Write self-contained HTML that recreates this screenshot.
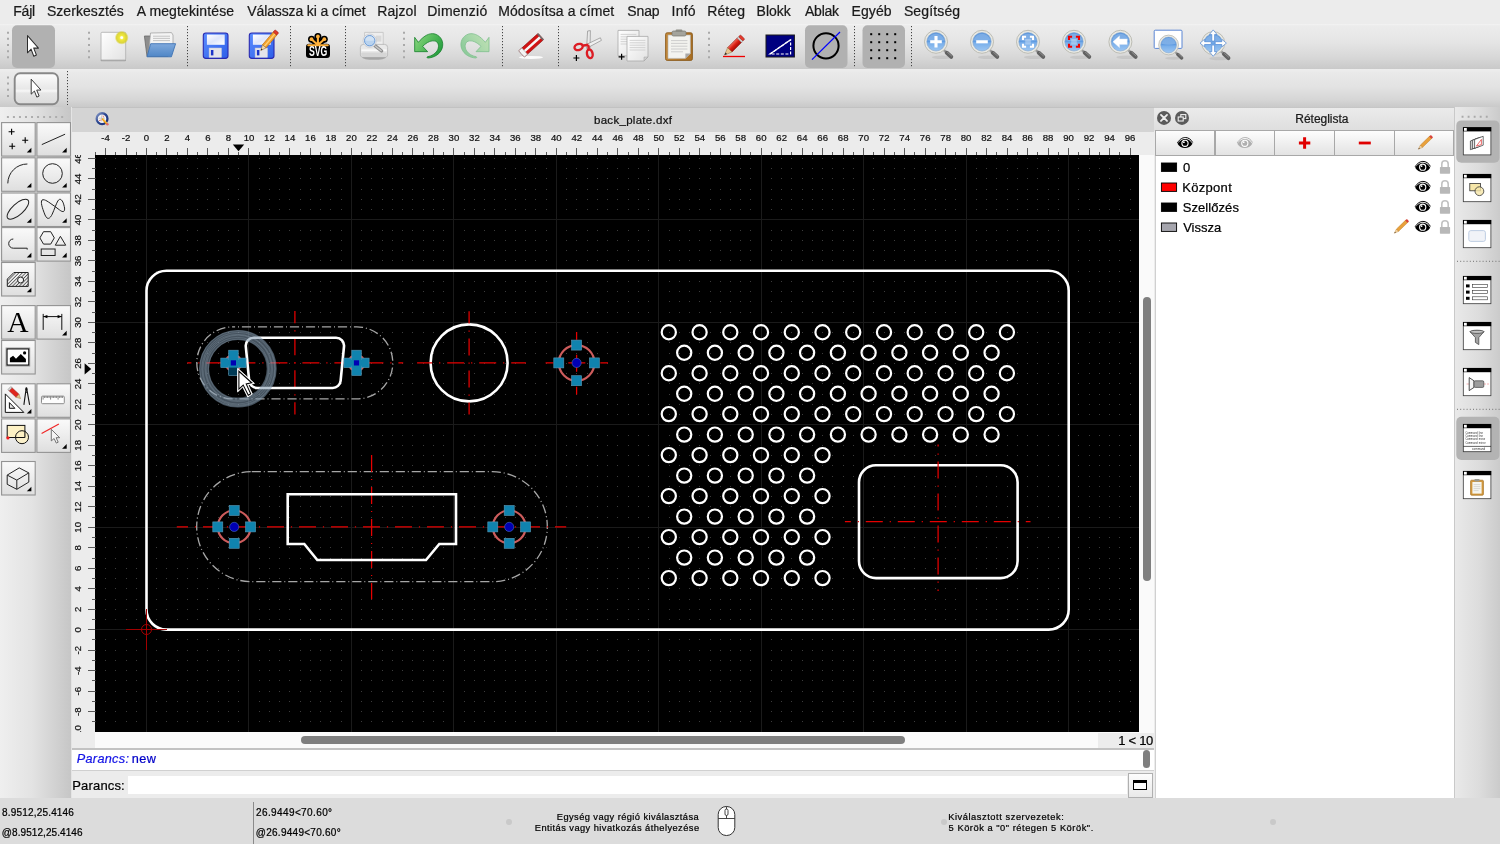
<!DOCTYPE html><html><head><meta charset="utf-8"><title>back_plate.dxf</title><style>
*{box-sizing:border-box;margin:0;padding:0}
html,body{width:1500px;height:844px;overflow:hidden;background:#ececec;font-family:"Liberation Sans",sans-serif;}
#app{position:absolute;left:0;top:0;width:1500px;height:844px;will-change:transform}
.abs{position:absolute}
.ft{position:absolute;white-space:nowrap;line-height:1;font-family:"Liberation Sans",sans-serif;-webkit-text-stroke:0.22px currentColor}
#menubar{position:absolute;left:0;top:0;width:1500px;height:24px;background:#ececec}
#tb1{position:absolute;left:0;top:24px;width:1500px;height:44.5px;background:linear-gradient(#f3f3f3,#ececec 4%,#e5e5e5 40%,#d7d7d7 75%,#c9c9c9)}
#tb2{position:absolute;left:0;top:68.5px;width:1500px;height:39px;background:linear-gradient(#eeeeee,#e9e9e9 10%,#e3e3e3 45%,#d6d6d6 78%,#c8c8c8)}
#left{position:absolute;left:0;top:107px;width:71px;height:691px;background:linear-gradient(90deg,#efefef,#e3e3e3 45%,#c6c6c6)}
.lb{position:absolute;width:34px;height:34px;border:1px solid #a9a9a9;background:linear-gradient(#fbfbfb,#e9e9e9 60%,#dcdcdc)}
.sel{position:absolute;background:#b2b2b2;border-radius:5px}
.vsep{position:absolute;width:0;border-left:1px dotted #555}
.grip{position:absolute;width:2px;border-left:2px dotted #aaa}
#status{position:absolute;left:0;top:798px;width:1500px;height:46px;background:#dcdcdc}
</style></head><body><div id="app">
<div id="menubar"></div>
<span class="ft" id="m0" style="left:13.2px;top:4.00px;font-size:14px;color:#1a1a1a;letter-spacing:-0.181px;">Fájl</span>
<span class="ft" id="m1" style="left:46.9px;top:4.00px;font-size:14px;color:#1a1a1a;letter-spacing:0.063px;">Szerkesztés</span>
<span class="ft" id="m2" style="left:136.7px;top:4.00px;font-size:14px;color:#1a1a1a;letter-spacing:0.129px;">A megtekintése</span>
<span class="ft" id="m3" style="left:247.3px;top:4.00px;font-size:14px;color:#1a1a1a;letter-spacing:-0.125px;">Válassza ki a címet</span>
<span class="ft" id="m4" style="left:377.2px;top:4.00px;font-size:14px;color:#1a1a1a;letter-spacing:0.103px;">Rajzol</span>
<span class="ft" id="m5" style="left:427.2px;top:4.00px;font-size:14px;color:#1a1a1a;letter-spacing:0.244px;">Dimenzió</span>
<span class="ft" id="m6" style="left:498.2px;top:4.00px;font-size:14px;color:#1a1a1a;letter-spacing:0.104px;">Módosítsa a címet</span>
<span class="ft" id="m7" style="left:627.3px;top:4.00px;font-size:14px;color:#1a1a1a;letter-spacing:-0.130px;">Snap</span>
<span class="ft" id="m8" style="left:671.6px;top:4.00px;font-size:14px;color:#1a1a1a;letter-spacing:0.203px;">Infó</span>
<span class="ft" id="m9" style="left:707.2px;top:4.00px;font-size:14px;color:#1a1a1a;letter-spacing:0.130px;">Réteg</span>
<span class="ft" id="m10" style="left:756.6px;top:4.00px;font-size:14px;color:#1a1a1a;letter-spacing:-0.015px;">Blokk</span>
<span class="ft" id="m11" style="left:805.0px;top:4.00px;font-size:14px;color:#1a1a1a;letter-spacing:-0.235px;">Ablak</span>
<span class="ft" id="m12" style="left:851.6px;top:4.00px;font-size:14px;color:#1a1a1a;letter-spacing:0.066px;">Egyéb</span>
<span class="ft" id="m13" style="left:903.9px;top:4.00px;font-size:14px;color:#1a1a1a;letter-spacing:0.137px;">Segítség</span>
<div id="tb1"></div><div id="tb2"></div>
<svg class="abs" style="left:0;top:24px" width="1500" height="84" viewBox="0 24 1500 84">
<defs>
<linearGradient id="gpaper" x1="0" y1="0" x2="1" y2="1"><stop offset="0" stop-color="#ffffff"/><stop offset="1" stop-color="#e2e2e2"/></linearGradient>
<radialGradient id="gglow"><stop offset="0" stop-color="#ffffc0"/><stop offset="0.35" stop-color="#f0e83a"/><stop offset="0.75" stop-color="#d8d020" stop-opacity="0.85"/><stop offset="1" stop-color="#d8d020" stop-opacity="0"/></radialGradient>
<linearGradient id="gfold" x1="0" y1="0" x2="0" y2="1"><stop offset="0" stop-color="#7fa9dc"/><stop offset="1" stop-color="#4f86c6"/></linearGradient>
<linearGradient id="gdisk" x1="0" y1="0" x2="1" y2="1"><stop offset="0" stop-color="#5a8cff"/><stop offset="1" stop-color="#2e5fe8"/></linearGradient>
<linearGradient id="glabel" x1="0" y1="0" x2="1" y2="1"><stop offset="0" stop-color="#ffffff"/><stop offset="0.5" stop-color="#dfe6fb"/><stop offset="1" stop-color="#ffffff"/></linearGradient>
<linearGradient id="ggreen" x1="0" y1="0.2" x2="1" y2="0.8"><stop offset="0" stop-color="#86d47c"/><stop offset="0.5" stop-color="#4fb857"/><stop offset="1" stop-color="#1f9a3c"/></linearGradient>
<linearGradient id="ggreen2" x1="0" y1="0.2" x2="1" y2="0.8"><stop offset="0" stop-color="#bfe0b4"/><stop offset="0.5" stop-color="#a4d6a8"/><stop offset="1" stop-color="#86c796"/></linearGradient>
<linearGradient id="glens" x1="0" y1="0" x2="0" y2="1"><stop offset="0" stop-color="#5b97de"/><stop offset="0.5" stop-color="#5f9ce2"/><stop offset="0.55" stop-color="#78aeea"/><stop offset="1" stop-color="#9cc6f2"/></linearGradient>
<linearGradient id="gclip" x1="0" y1="0" x2="1" y2="0"><stop offset="0" stop-color="#c48a3c"/><stop offset="1" stop-color="#a86e22"/></linearGradient>
<linearGradient id="gpen" x1="0" y1="0" x2="1" y2="0"><stop offset="0" stop-color="#f26a5c"/><stop offset="0.5" stop-color="#d81e12"/><stop offset="1" stop-color="#a80e08"/></linearGradient>
<g id="zoom"><ellipse cx="6" cy="15.4" rx="10" ry="1.8" fill="#888" opacity="0.2"/><path d="M7.4 7.8L15 14.8" stroke="#9a9a9a" stroke-width="2.6" stroke-linecap="round"/><path d="M10.8 11L15.2 15" stroke="#626262" stroke-width="4" stroke-linecap="round"/><path d="M11.4 10.4L15.6 14.2" stroke="#9a9a9a" stroke-width="0.8" stroke-linecap="round"/><circle cx="0" cy="0" r="11.5" fill="#e9e9e3" stroke="#bcbcb4" stroke-width="1"/><circle cx="0" cy="0" r="9.2" fill="url(#glens)" stroke="#7fa2cc" stroke-width="0.6"/><path d="M-8.2 -1.5A8.4 8.4 0 0 1 8.2 -1.5A14 6 0 0 1 -8.2 -1.5Z" fill="#fff" fill-opacity="0.2"/></g>
</defs>
<rect x="12" y="25.3" width="43" height="42.7" rx="5" fill="#b1b1b1"/>
<rect x="805" y="25.3" width="42.5" height="42.7" rx="5" fill="#b1b1b1"/>
<rect x="862.5" y="25.3" width="42.5" height="42.7" rx="5" fill="#b1b1b1"/>
<path d="M8 31.7V59" stroke="#a9a9a9" stroke-width="2" stroke-dasharray="2 4.15"/>
<path d="M89 31.7V59" stroke="#a9a9a9" stroke-width="2" stroke-dasharray="2 4.15"/>
<path d="M404 31.7V59" stroke="#a9a9a9" stroke-width="2" stroke-dasharray="2 4.15"/>
<path d="M709 31.7V59" stroke="#a9a9a9" stroke-width="2" stroke-dasharray="2 4.15"/>
<path d="M187.5 26V66.5" stroke="#444" stroke-width="1" stroke-dasharray="1.2 1.8"/>
<path d="M290.5 26V66.5" stroke="#444" stroke-width="1" stroke-dasharray="1.2 1.8"/>
<path d="M345.5 26V66.5" stroke="#444" stroke-width="1" stroke-dasharray="1.2 1.8"/>
<path d="M502.5 26V66.5" stroke="#444" stroke-width="1" stroke-dasharray="1.2 1.8"/>
<path d="M558.5 26V66.5" stroke="#444" stroke-width="1" stroke-dasharray="1.2 1.8"/>
<path d="M854.5 26V66.5" stroke="#444" stroke-width="1" stroke-dasharray="1.2 1.8"/>
<path d="M911.5 26V66.5" stroke="#444" stroke-width="1" stroke-dasharray="1.2 1.8"/>
<path transform="translate(27.5 35.6) scale(0.9 1)" d="M0 0V17.2L4 13.6L7 20.6L9.9 19.4L6.9 12.5H12.2Z" fill="#fff" stroke="#2a2a2a" stroke-width="1.1" stroke-linejoin="round"/>
<rect x="100.6" y="59" width="25.4" height="2.2" rx="1" fill="#8f8f8f" opacity="0.75"/><rect x="101" y="32.3" width="24.7" height="27.7" rx="1" fill="url(#gpaper)" stroke="#b4b4b4" stroke-width="0.9"/><circle cx="121.7" cy="37.7" r="7" fill="url(#gglow)"/><circle cx="121.7" cy="37.7" r="1.4" fill="#fff"/>
<path d="M144.4 36H150L151.5 38H168V56.5H147Z" fill="#8d8d8d" stroke="#6a6a6a" stroke-width="0.8"/><path d="M150.5 33L171.5 32.6L173 35V50H149Z" fill="#f4f4f4" stroke="#9a9a9a" stroke-width="0.7"/><path d="M153 36.2H170M153 38.4H170M153 40.6H170" stroke="#bdbdbd" stroke-width="0.9"/><path d="M150.7 43.7H175.6L171.4 56.8H147Z" fill="url(#gfold)" stroke="#3f74b4" stroke-width="0.9" stroke-linejoin="round"/>
<rect x="203.3" y="33" width="24.7" height="25.4" rx="2.6" fill="url(#gdisk)" stroke="#2a2ab0" stroke-width="1.1"/><rect x="206.9" y="34.6" width="17.8" height="10.2" fill="url(#glabel)"/><rect x="209.10000000000002" y="48" width="12.4" height="9.3" fill="#e4e4ea" stroke="#c8c8d6" stroke-width="0.5"/><rect x="210.9" y="50" width="2.5" height="5.4" fill="#1b35c9"/>
<rect x="249.3" y="33" width="24.7" height="25.4" rx="2.6" fill="url(#gdisk)" stroke="#2a2ab0" stroke-width="1.1"/><rect x="252.9" y="34.6" width="17.8" height="10.2" fill="url(#glabel)"/><rect x="255.10000000000002" y="48" width="12.4" height="9.3" fill="#e4e4ea" stroke="#c8c8d6" stroke-width="0.5"/><rect x="256.90000000000003" y="50" width="2.5" height="5.4" fill="#1b35c9"/>
<g transform="translate(267.5 42.5) rotate(40)"><rect x="-2.4" y="-12" width="4.8" height="17" fill="#f4a22c" stroke="#b96a10" stroke-width="0.6"/><rect x="-0.6" y="-12" width="1.4" height="17" fill="#ffd27a"/><rect x="-2.4" y="-14.6" width="4.8" height="3" rx="0.8" fill="#e0392b" stroke="#96160e" stroke-width="0.5"/><path d="M-2.4 5L0 10.4L2.4 5Z" fill="#f1d9b0" stroke="#9a6a2a" stroke-width="0.5"/><path d="M-0.8 8.6L0 10.4L0.8 8.6Z" fill="#222"/></g>
<path d="M317.9 45L317.9 36.4M317.9 45L311.5 39.2M317.9 45L324.3 39.2" stroke="#000" stroke-width="5.4" stroke-linecap="round" fill="none"/>
<circle cx="317.9" cy="36.4" r="3.5" fill="#000"/><circle cx="311.5" cy="39.2" r="3.5" fill="#000"/><circle cx="324.3" cy="39.2" r="3.5" fill="#000"/>
<rect x="306" y="43.8" width="24" height="14.2" rx="3.2" fill="#000"/>
<path d="M317.9 45L317.9 36.4M317.9 45L311.5 39.2M317.9 45L324.3 39.2" stroke="#ffb13b" stroke-width="2.1" stroke-linecap="round" fill="none"/>
<circle cx="317.9" cy="36.4" r="1.9" fill="#ffb13b"/><circle cx="311.5" cy="39.2" r="1.9" fill="#ffb13b"/><circle cx="324.3" cy="39.2" r="1.9" fill="#ffb13b"/>
<path d="M308.2 45.3H327.8" stroke="#ffb13b" stroke-width="1.9" stroke-linecap="round"/>
<text x="318.1" y="56.3" font-family="Liberation Sans, sans-serif" font-weight="bold" font-size="13.8" text-anchor="middle" fill="#fff" textLength="18.4" lengthAdjust="spacingAndGlyphs">SVG</text>
<ellipse cx="374" cy="57.6" rx="12" ry="2.2" fill="#7d7d7d" opacity="0.55"/>
<path d="M364.6 32.4H383.2V46H364.6Z" fill="#eeeeee" stroke="#c2c2c2" stroke-width="0.8"/><path d="M376 35.6H381.4V41.6H376Z" fill="#d9d9d9"/>
<path d="M360.4 47.4Q360.4 44.4 363.4 44.4H384.6Q387.6 44.4 387.6 47.4V55Q387.6 57 385.6 57H362.4Q360.4 57 360.4 55Z" fill="#e9e9e9" stroke="#b5b5b5" stroke-width="0.8"/><path d="M361.4 50.2H386.6" stroke="#fafafa" stroke-width="1.6"/><rect x="361.2" y="52.4" width="25.6" height="4" rx="1" fill="#d6d6d6"/>
<path d="M374.6 45.4L381.6 51" stroke="#8d8d8d" stroke-width="3.4" stroke-linecap="round"/><path d="M375.6 46.2L381.2 50.6" stroke="#c9c9c9" stroke-width="1.4" stroke-linecap="round"/>
<circle cx="369.7" cy="40.7" r="6.7" fill="#e9ebee" stroke="#c3c6cc" stroke-width="0.7"/><circle cx="369.7" cy="40.7" r="5.2" fill="#b9d3ef" stroke="#5f93d4" stroke-width="0.9"/><path d="M365 40.2A4.8 4.8 0 0 1 374.4 40.2A9 4 0 0 1 365 40.2Z" fill="#fff" fill-opacity="0.35"/>
<path transform="translate(405 26) scale(0.066667)" d="M145 170L200 245C270 160 360 95 450 120C540 150 590 240 555 340C520 430 430 475 345 480C328 480 325 466 335 462C400 450 450 420 480 375C515 320 510 250 460 228C400 210 330 240 265 305L340 385L145 385Z" fill="url(#ggreen)" stroke="#16802c" stroke-width="12" stroke-linejoin="round"/>
<path transform="translate(498.67 26) scale(-0.066667 0.066667)" d="M145 170L200 245C270 160 360 95 450 120C540 150 590 240 555 340C520 430 430 475 345 480C328 480 325 466 335 462C400 450 450 420 480 375C515 320 510 250 460 228C400 210 330 240 265 305L340 385L145 385Z" fill="url(#ggreen2)" stroke="#7fbf8e" stroke-width="12" stroke-linejoin="round"/>
<ellipse cx="531" cy="57.4" rx="12" ry="1.5" fill="#fff" opacity="0.9"/><g transform="translate(531.2 45.2) rotate(-42)"><rect x="-13" y="-4.2" width="26" height="8.4" rx="1" fill="#d11212" stroke="#8c0f0f" stroke-width="0.6"/><rect x="-13" y="-1.2" width="26" height="2.4" fill="#f6f6f6"/><rect x="-13" y="-4.2" width="4.2" height="8.4" fill="#f4f4f4" stroke="#9a9a9a" stroke-width="0.6"/><rect x="11.6" y="-4.2" width="1.6" height="8.4" fill="#6b6b6b"/></g>
<g transform="translate(0 -3.6)"><path d="M587.6 34.6L590.4 34.2L590 52H586.6Z" fill="#e9e9e9" stroke="#8d8d8d" stroke-width="0.7"/><path d="M600.4 41.4L601.4 44L589 50.6L587.4 47.6Z" fill="#f0f0f0" stroke="#8d8d8d" stroke-width="0.7"/><ellipse cx="578.6" cy="50.6" rx="4.2" ry="3" fill="none" stroke="#dc1c24" stroke-width="2.4" transform="rotate(-20 578.6 50.6)"/><ellipse cx="589.8" cy="57.4" rx="2.8" ry="4.4" fill="none" stroke="#dc1c24" stroke-width="2.4" transform="rotate(-12 589.8 57.4)"/><path d="M582 49.4L588.4 48.4M588.8 52.4L588.2 48.6" stroke="#dc1c24" stroke-width="2.4"/><path d="M573.4 61.6H579.4M576.4 58.6V64.6" stroke="#000" stroke-width="1.2"/></g>
<path d="M618 30.4H639V51.8L635 55.8H618Z" fill="url(#gpaper)" stroke="#a9a9a9" stroke-width="0.8"/><path d="M639 51.8H635V55.8Z" fill="#d0d0d0" stroke="#a0a0a0" stroke-width="0.5"/><path d="M620.6 34.4H636.4" stroke="#cfcfcf" stroke-width="0.9"/><path d="M620.6 36.8H636.4" stroke="#cfcfcf" stroke-width="0.9"/><path d="M620.6 39.199999999999996H636.4" stroke="#cfcfcf" stroke-width="0.9"/><path d="M620.6 41.599999999999994H636.4" stroke="#cfcfcf" stroke-width="0.9"/><path d="M620.6 44.0H636.4" stroke="#cfcfcf" stroke-width="0.9"/><path d="M627 36.4H648V57.0L644 61.0H627Z" fill="url(#gpaper)" stroke="#a9a9a9" stroke-width="0.8"/><path d="M648 57.0H644V61.0Z" fill="#d0d0d0" stroke="#a0a0a0" stroke-width="0.5"/><path d="M629.6 40.4H645.4" stroke="#cfcfcf" stroke-width="0.9"/><path d="M629.6 42.8H645.4" stroke="#cfcfcf" stroke-width="0.9"/><path d="M629.6 45.199999999999996H645.4" stroke="#cfcfcf" stroke-width="0.9"/><path d="M629.6 47.599999999999994H645.4" stroke="#cfcfcf" stroke-width="0.9"/><path d="M629.6 50.0H645.4" stroke="#cfcfcf" stroke-width="0.9"/>
<path d="M618.6 56.8H624.6M621.6 53.8V59.8" stroke="#000" stroke-width="1.2"/>
<rect x="665.6" y="32.8" width="26.8" height="27.6" rx="1.6" fill="url(#gclip)" stroke="#8a5a1c" stroke-width="0.9"/><path d="M668 35H690.4V53.4L685.4 58.4H668Z" fill="#f3f3ef" stroke="#b4b4b0" stroke-width="0.6"/><path d="M690.4 53.4H685.4V58.4Z" fill="#a9a9a9"/><path d="M671 40.6H687.4M671 43.4H687.4M671 46.2H687.4M671 49H687.4M671 51.8H683" stroke="#c8c8c8" stroke-width="0.9"/><rect x="672" y="31" width="14" height="5" rx="1.4" fill="#a4a49c" stroke="#77776f" stroke-width="0.7"/><rect x="675.6" y="29.6" width="6.8" height="2.4" rx="1" fill="#8c8c84"/>
<path d="M723 56.5H745" stroke="#f00000" stroke-width="1.3"/><g transform="translate(732.6 47) rotate(45) scale(0.91)"><rect x="-3.4" y="-11" width="6.8" height="15.4" fill="url(#gpen)" stroke="#8a0c06" stroke-width="0.6"/><rect x="-3.4" y="-13" width="6.8" height="2.6" fill="#cfcfcf" stroke="#888" stroke-width="0.4"/><rect x="-3.4" y="-15.6" width="6.8" height="3" rx="1.2" fill="#e33a2c" stroke="#8a0c06" stroke-width="0.5"/><path d="M-3.4 4.4L0 12.6L3.4 4.4Z" fill="#e9c690" stroke="#8a6a3a" stroke-width="0.5"/><path d="M-1.2 9.8L0 12.6L1.2 9.8Z" fill="#222"/></g>
<rect x="766" y="35" width="28.4" height="22" fill="#000080" stroke="#1a1a1a" stroke-width="1"/><path d="M770 54L790.6 39.8V54Z" fill="none" stroke="#fff" stroke-width="1.2" stroke-dasharray="3 1.6"/><path d="M770 54L790.6 39.8" stroke="#fff" stroke-width="1.3"/>
<circle cx="826" cy="45.8" r="12.6" fill="none" stroke="#000" stroke-width="2"/><path d="M812 59.6L840 32" stroke="#0000ff" stroke-width="1.2"/>
<g fill="#000"><rect x="870.2" y="33.2" width="2" height="2"/><rect x="870.2" y="41.2" width="2" height="2"/><rect x="870.2" y="49.2" width="2" height="2"/><rect x="870.2" y="57.2" width="2" height="2"/><rect x="878.2" y="33.2" width="2" height="2"/><rect x="878.2" y="41.2" width="2" height="2"/><rect x="878.2" y="49.2" width="2" height="2"/><rect x="878.2" y="57.2" width="2" height="2"/><rect x="886.2" y="33.2" width="2" height="2"/><rect x="886.2" y="41.2" width="2" height="2"/><rect x="886.2" y="49.2" width="2" height="2"/><rect x="886.2" y="57.2" width="2" height="2"/><rect x="894.2" y="33.2" width="2" height="2"/><rect x="894.2" y="41.2" width="2" height="2"/><rect x="894.2" y="49.2" width="2" height="2"/><rect x="894.2" y="57.2" width="2" height="2"/></g>
<g transform="translate(936 41.8)"><use href="#zoom"/></g>
<g transform="translate(982 41.8)"><use href="#zoom"/></g>
<g transform="translate(1028 41.8)"><use href="#zoom"/></g>
<g transform="translate(1074 41.8)"><use href="#zoom"/></g>
<g transform="translate(1120.4 41.8)"><use href="#zoom"/></g>
<rect x="1154.2" y="30.2" width="27.8" height="18.2" rx="1" fill="#fff" stroke="#5a86d4" stroke-width="1"/>
<g transform="translate(1168.6 45) scale(0.86)"><use href="#zoom"/></g>
<g transform="translate(1213.2 43.1)"><use href="#zoom"/></g>
<path d="M930.2 41.8H941.8M936 36.0V47.599999999999994" stroke="#fff" stroke-width="3.1"/>
<path d="M976.2 41.8H987.8" stroke="#fff" stroke-width="3.1"/>
<rect x="1025.2" y="39.0" width="5.6" height="5.6" fill="#fff" fill-opacity="0.3"/><path d="M1023 39.9V36.8H1026.1M1023 43.699999999999996V46.8H1026.1M1033 39.9V36.8H1029.9M1033 43.699999999999996V46.8H1029.9" stroke="#fff" stroke-width="2.1" fill="none"/>
<rect x="1071.2" y="39.0" width="5.6" height="5.6" fill="#fff" fill-opacity="0.3"/><path d="M1069 39.9V36.8H1072.1M1069 43.699999999999996V46.8H1072.1M1079 39.9V36.8H1075.9M1079 43.699999999999996V46.8H1075.9" stroke="#f00000" stroke-width="2.1" fill="none"/>
<path d="M1112.8000000000002 41.8L1119.6000000000001 35.8V39.0H1127.2V44.599999999999994H1119.6000000000001V47.8Z" fill="#fff" stroke="#dfe9f6" stroke-width="0.4"/>
<path transform="rotate(0 1213.2 43.1)" d="M1211.8 41.1V34.5H1209.4L1213.2 29.900000000000002L1217.0 34.5H1214.6000000000001V41.1Z" fill="#fff" stroke="#4f86d2" stroke-width="0.7"/><path transform="rotate(90 1213.2 43.1)" d="M1211.8 41.1V34.5H1209.4L1213.2 29.900000000000002L1217.0 34.5H1214.6000000000001V41.1Z" fill="#fff" stroke="#4f86d2" stroke-width="0.7"/><path transform="rotate(180 1213.2 43.1)" d="M1211.8 41.1V34.5H1209.4L1213.2 29.900000000000002L1217.0 34.5H1214.6000000000001V41.1Z" fill="#fff" stroke="#4f86d2" stroke-width="0.7"/><path transform="rotate(270 1213.2 43.1)" d="M1211.8 41.1V34.5H1209.4L1213.2 29.900000000000002L1217.0 34.5H1214.6000000000001V41.1Z" fill="#fff" stroke="#4f86d2" stroke-width="0.7"/>
<path d="M8 76.4V98" stroke="#a9a9a9" stroke-width="2" stroke-dasharray="2 4.2"/>
<path d="M67.5 71V105" stroke="#444" stroke-width="1" stroke-dasharray="1.2 1.8"/>
<defs><linearGradient id="gb2" x1="0" y1="0" x2="0" y2="1"><stop offset="0" stop-color="#fdfdfd"/><stop offset="0.5" stop-color="#e8e8e8"/><stop offset="0.57" stop-color="#f7f7f7"/><stop offset="0.64" stop-color="#e6e6e6"/><stop offset="1" stop-color="#dbdbdb"/></linearGradient></defs>
<rect x="14.7" y="73.3" width="43.4" height="30.9" rx="5.4" fill="url(#gb2)" stroke="#888" stroke-width="1.9"/>
<path transform="translate(31.2 79.2) scale(0.8 0.87)" d="M0 0V17.2L4 13.6L7 20.6L9.9 19.4L6.9 12.5H12.2Z" fill="#fff" stroke="#2a2a2a" stroke-width="1.1" stroke-linejoin="round"/>
</svg>
<!--TB2ICONS-->
<div id="left"></div>
<svg class="abs" style="left:0;top:107px" width="72" height="400" viewBox="0 107 72 400">
<defs><linearGradient id="bg" x1="0" y1="0" x2="0" y2="1"><stop offset="0" stop-color="#fafafa"/><stop offset="0.45" stop-color="#eeeeee"/><stop offset="1" stop-color="#dedede"/></linearGradient><pattern id="ht" width="2.4" height="2.4" patternUnits="userSpaceOnUse" patternTransform="rotate(-45)"><rect width="2.4" height="0.8" fill="#555"/></pattern></defs>
<path d="M6.9 116.9H64" stroke="#adadad" stroke-width="2" stroke-dasharray="2 4.03"/>
<rect x="1.6" y="122.6" width="33.6" height="33.5" fill="url(#bg)" stroke="#939393" stroke-width="1.1"/>
<path d="M31.400000000000002 147.79999999999998V152.4H26.8Z" fill="#000"/>
<rect x="36.9" y="122.6" width="33.6" height="33.5" fill="url(#bg)" stroke="#939393" stroke-width="1.1"/>
<path d="M66.7 147.79999999999998V152.4H62.099999999999994Z" fill="#000"/>
<rect x="1.6" y="157.8" width="33.6" height="33.5" fill="url(#bg)" stroke="#939393" stroke-width="1.1"/>
<path d="M31.400000000000002 183.0V187.60000000000002H26.8Z" fill="#000"/>
<rect x="36.9" y="157.8" width="33.6" height="33.5" fill="url(#bg)" stroke="#939393" stroke-width="1.1"/>
<path d="M66.7 183.0V187.60000000000002H62.099999999999994Z" fill="#000"/>
<rect x="1.6" y="193" width="33.6" height="33.5" fill="url(#bg)" stroke="#939393" stroke-width="1.1"/>
<path d="M31.400000000000002 218.2V222.8H26.8Z" fill="#000"/>
<rect x="36.9" y="193" width="33.6" height="33.5" fill="url(#bg)" stroke="#939393" stroke-width="1.1"/>
<path d="M66.7 218.2V222.8H62.099999999999994Z" fill="#000"/>
<rect x="1.6" y="227.6" width="33.6" height="33.5" fill="url(#bg)" stroke="#939393" stroke-width="1.1"/>
<path d="M31.400000000000002 252.79999999999998V257.4H26.8Z" fill="#000"/>
<rect x="36.9" y="227.6" width="33.6" height="33.5" fill="url(#bg)" stroke="#939393" stroke-width="1.1"/>
<path d="M66.7 252.79999999999998V257.4H62.099999999999994Z" fill="#000"/>
<rect x="1.6" y="262.5" width="33.6" height="33.5" fill="url(#bg)" stroke="#939393" stroke-width="1.1"/>
<path d="M31.400000000000002 287.7V292.3H26.8Z" fill="#000"/>
<rect x="1.6" y="305.6" width="33.6" height="33.5" fill="url(#bg)" stroke="#939393" stroke-width="1.1"/>
<rect x="36.9" y="305.6" width="33.6" height="33.5" fill="url(#bg)" stroke="#939393" stroke-width="1.1"/>
<path d="M66.7 330.8V335.40000000000003H62.099999999999994Z" fill="#000"/>
<rect x="1.6" y="340.5" width="33.6" height="33.5" fill="url(#bg)" stroke="#939393" stroke-width="1.1"/>
<rect x="1.6" y="383.8" width="33.6" height="33.5" fill="url(#bg)" stroke="#939393" stroke-width="1.1"/>
<path d="M31.400000000000002 409.0V413.6H26.8Z" fill="#000"/>
<rect x="36.9" y="383.8" width="33.6" height="33.5" fill="url(#bg)" stroke="#939393" stroke-width="1.1"/>
<rect x="1.6" y="418.9" width="33.6" height="33.5" fill="url(#bg)" stroke="#939393" stroke-width="1.1"/>
<rect x="36.9" y="418.9" width="33.6" height="33.5" fill="url(#bg)" stroke="#939393" stroke-width="1.1"/>
<path d="M66.7 444.09999999999997V448.7H62.099999999999994Z" fill="#000"/>
<rect x="1.6" y="461.5" width="33.6" height="33.5" fill="url(#bg)" stroke="#939393" stroke-width="1.1"/>
<path d="M31.400000000000002 486.7V491.3H26.8Z" fill="#000"/>
<g transform="translate(1.6 122.6)"><path d="M7 9.1H13M10 6.1V12.1M20.6 17.7H26.6M23.6 14.7V20.7M7.6 23.7H13.6M10.6 20.7V26.7" stroke="#000" stroke-width="1.1" fill="none"/></g>
<g transform="translate(36.9 122.6)"><path d="M4.9 22L28.2 11.6" stroke="#222" stroke-width="1" fill="none"/></g>
<g transform="translate(1.6 157.8)"><path d="M6.2 25.6A19.5 19.5 0 0 1 25.8 6.2" stroke="#222" stroke-width="1" fill="none"/></g>
<g transform="translate(36.9 157.8)"><circle cx="15.6" cy="15.7" r="9.8" stroke="#222" stroke-width="1" fill="none"/></g>
<g transform="translate(1.6 193)"><ellipse cx="16.3" cy="16.2" rx="13.6" ry="5.6" transform="rotate(-42 16.3 16.2)" stroke="#222" stroke-width="1" fill="none"/></g>
<g transform="translate(36.9 193)"><path d="M5.1 7.1C3.6 9 5 14 8.1 22C9.5 25 10.8 25.6 11.5 25.4C13 25.2 14.5 23 15.3 21.2C16.5 18.5 17.5 16 18.3 13.9C19 12 20 9.5 20.9 8C21.8 6.6 22.8 6.1 23.4 6.3C25 6.8 26 9 26.4 10.1C27.2 12.5 27.8 15 27.7 16.1C27.6 18 27 18.7 26 18.6C24.5 18.5 23 17.2 22.1 16.5C19 14.2 16 12 13.2 10.1C11 8.6 9 7.3 7.6 6.9C6.5 6.6 5.6 6.6 5.1 7.1Z" stroke="#222" stroke-width="1" fill="none"/></g>
<g transform="translate(1.6 227.6)"><path d="M11.7 11.4A4.6 4.6 0 0 0 11.7 20.6H25.6V22" stroke="#222" stroke-width="1" fill="none"/></g>
<g transform="translate(36.9 227.6)"><polygon points="17.4,10.3 13.8,16.5 6.6,16.5 3.0,10.3 6.6,4.1 13.8,4.1" stroke="#222" stroke-width="1" fill="none"/><path d="M23.5 8.7L28.8 17.6H18.4Z" stroke="#222" stroke-width="1" fill="none"/><rect x="4.3" y="21.4" width="13.9" height="6.5" stroke="#222" stroke-width="1" fill="none"/></g>
<g transform="translate(1.6 262.5)"><path d="M5.7 23.9V16.6L12.3 10H26.6V23.9Z" fill="url(#ht)" stroke="#222" stroke-width="1"/><circle cx="19" cy="17.5" r="3" fill="#f3f3f3" stroke="#222" stroke-width="1"/></g>
<text x="17.9" y="331.9" font-family="Liberation Serif, serif" font-size="29.5" text-anchor="middle" fill="#000">A</text>
<g transform="translate(36.9 305.6)"><path d="M6.3 8.3V24.3M24.9 8.3V24.3M6.3 11H24.9" stroke="#111" stroke-width="1" fill="none"/><path d="M6.3 11L10.5 9.3V12.7ZM24.9 11L20.7 9.3V12.7Z" fill="#000"/></g>
<g transform="translate(1.6 340.5)"><rect x="4.4" y="7.4" width="23.8" height="18.2" fill="#fff" stroke="#9a9a9a" stroke-width="0.8"/><rect x="5.4" y="8.4" width="21.8" height="16.2" fill="#fff" stroke="#000" stroke-width="1.1"/><path d="M8.3 21.8V17.5L11.5 15.2L14.4 18.2L19.2 13.6L24.3 18.6V21.8Z" fill="#000"/><circle cx="23" cy="12.4" r="1.6" fill="#000"/></g>
<g transform="translate(1.6 383.8)"><path d="M3.7 10.1V28.6H22.2Z M7.8 18.8V24.5H13.3Z" fill="#fff" fill-rule="evenodd" stroke="#111" stroke-width="1"/><g transform="translate(13.4 9.6) rotate(-47)"><rect x="-2.1" y="-6.5" width="4.2" height="10" fill="#e0261c" stroke="#8e130c" stroke-width="0.5"/><rect x="-2.1" y="-7.8" width="4.2" height="1.8" fill="#d9d9d9" stroke="#777" stroke-width="0.4"/><path d="M-2.1 3.5L0 7.6L2.1 3.5Z" fill="#e8c48b" stroke="#8e6a2c" stroke-width="0.4"/></g><path d="M24.7 3.6L22.3 21M24.9 3.6L28 21M23.9 8.4H25.9" stroke="#111" stroke-width="1.1" fill="none"/><circle cx="24.8" cy="5.4" r="1.1" fill="#111"/></g>
<g transform="translate(36.9 383.8)"><rect x="4.6" y="12.3" width="22.8" height="7.6" rx="1" fill="#fdfdfd" stroke="#8c8c8c" stroke-width="1"/><path d="M6.2 12.5V15.8M7.7 12.5V14.2M9.2 12.5V14.2M10.7 12.5V14.2M12.2 12.5V14.2M13.7 12.5V15.8M15.2 12.5V14.2M16.7 12.5V14.2M18.2 12.5V14.2M19.7 12.5V14.2M21.2 12.5V15.8M22.7 12.5V14.2M24.2 12.5V14.2M25.7 12.5V14.2" stroke="#555" stroke-width="0.7"/></g>
<g transform="translate(1.6 418.9)"><rect x="5.6" y="6.5" width="17.7" height="12.1" fill="#fdf1c4" stroke="#111" stroke-width="1"/><circle cx="20.4" cy="18.3" r="6.5" fill="#fdf1c4" fill-opacity="0.85" stroke="#111" stroke-width="1"/><path d="M14 18.6H23.3V12" stroke="#111" stroke-width="1" fill="none"/><circle cx="6.3" cy="19" r="1.6" fill="#f21d1d"/></g>
<g transform="translate(36.9 418.9)"><path d="M4.7 14.7L22 5" stroke="#f02626" stroke-width="1.2"/><path d="M14.4 10.4V22L17.2 19.6L19.4 24.2L21.3 23.3L19.2 18.8H22.8Z" fill="#f4f4f4" stroke="#666" stroke-width="0.9" stroke-linejoin="round"/></g>
<g transform="translate(1.6 461.5)"><path d="M5.6 13.6L17.6 6.4L27.2 11.4V20.6L15.2 27.8L5.6 22.8ZM5.6 13.6L15.2 18.6L27.2 11.4M15.2 18.6V27.8" stroke="#222" stroke-width="1" fill="none" stroke-linejoin="round"/></g>
</svg>
<div class="abs" style="left:70.5px;top:107px;width:2px;height:691px;background:#e4e4e4"></div>
<div class="abs" style="left:72px;top:107px;width:1082px;height:25px;background:#d4d4d4;border-top:1px solid #c2c2c2"></div>
<span class="ft" id="title" style="left:594.0px;top:115.15px;font-size:11.5px;color:#111;letter-spacing:0.291px;">back_plate.dxf</span>
<div class="abs" style="left:72px;top:132px;width:1078px;height:23px;background:#ececec"></div>
<div class="abs" style="left:72px;top:155px;width:23px;height:577px;background:#ececec"></div>
<div class="abs" style="left:95px;top:155px;width:1044px;height:577px;background:#000"></div>
<div class="abs" style="left:1139px;top:155px;width:15px;height:577px;background:#fafafa"></div>
<div class="abs" style="left:1143px;top:297px;width:8px;height:284px;background:#7f7f7f;border-radius:4px"></div>
<svg class="abs" style="left:0;top:0" width="1500" height="844" viewBox="0 0 1500 844">
<path d="M95.5 152V155M105.5 148V155M115.5 152V155M126.5 148V155M136.5 152V155M146.5 148V155M156.5 152V155M166.5 148V155M177.5 152V155M187.5 148V155M197.5 152V155M207.5 148V155M218.5 152V155M228.5 148V155M238.5 152V155M248.5 148V155M259.5 152V155M269.5 148V155M279.5 152V155M289.5 148V155M300.5 152V155M310.5 148V155M320.5 152V155M330.5 148V155M341.5 152V155M351.5 148V155M361.5 152V155M371.5 148V155M382.5 152V155M392.5 148V155M402.5 152V155M412.5 148V155M423.5 152V155M433.5 148V155M443.5 152V155M453.5 148V155M464.5 152V155M474.5 148V155M484.5 152V155M494.5 148V155M505.5 152V155M515.5 148V155M525.5 152V155M535.5 148V155M546.5 152V155M556.5 148V155M566.5 152V155M576.5 148V155M587.5 152V155M597.5 148V155M607.5 152V155M617.5 148V155M628.5 152V155M638.5 148V155M648.5 152V155M658.5 148V155M669.5 152V155M679.5 148V155M689.5 152V155M699.5 148V155M710.5 152V155M720.5 148V155M730.5 152V155M740.5 148V155M750.5 152V155M761.5 148V155M771.5 152V155M781.5 148V155M791.5 152V155M802.5 148V155M812.5 152V155M822.5 148V155M832.5 152V155M843.5 148V155M853.5 152V155M863.5 148V155M873.5 152V155M884.5 148V155M894.5 152V155M904.5 148V155M914.5 152V155M925.5 148V155M935.5 152V155M945.5 148V155M955.5 152V155M966.5 148V155M976.5 152V155M986.5 148V155M996.5 152V155M1007.5 148V155M1017.5 152V155M1027.5 148V155M1037.5 152V155M1048.5 148V155M1058.5 152V155M1068.5 148V155M1078.5 152V155M1089.5 148V155M1099.5 152V155M1109.5 148V155M1119.5 152V155M1130.5 148V155M92 721.5H95M88 711.5H95M92 701.5H95M88 691.5H95M92 680.5H95M88 670.5H95M92 660.5H95M88 650.5H95M92 639.5H95M88 629.5H95M92 619.5H95M88 609.5H95M92 599.5H95M88 588.5H95M92 578.5H95M88 568.5H95M92 558.5H95M88 547.5H95M92 537.5H95M88 527.5H95M92 517.5H95M88 506.5H95M92 496.5H95M88 486.5H95M92 476.5H95M88 465.5H95M92 455.5H95M88 445.5H95M92 435.5H95M88 424.5H95M92 414.5H95M88 404.5H95M92 394.5H95M88 383.5H95M92 373.5H95M88 363.5H95M92 353.5H95M88 342.5H95M92 332.5H95M88 322.5H95M92 312.5H95M88 301.5H95M92 291.5H95M88 281.5H95M92 271.5H95M88 260.5H95M92 250.5H95M88 240.5H95M92 230.5H95M88 219.5H95M92 209.5H95M88 199.5H95M92 189.5H95M88 178.5H95M92 168.5H95M88 158.5H95" stroke="#5a5a5a" stroke-width="1" fill="none"/>
<g font-family="Liberation Sans, sans-serif" font-size="9.6" fill="#111" stroke="#111" stroke-width="0.22" text-anchor="middle">
<text x="105.5" y="140.9">-4</text>
<text x="126.0" y="140.9">-2</text>
<text x="146.5" y="140.9">0</text>
<text x="167.0" y="140.9">2</text>
<text x="187.5" y="140.9">4</text>
<text x="208.0" y="140.9">6</text>
<text x="228.5" y="140.9">8</text>
<text x="249.0" y="140.9">10</text>
<text x="269.4" y="140.9">12</text>
<text x="289.9" y="140.9">14</text>
<text x="310.4" y="140.9">16</text>
<text x="330.9" y="140.9">18</text>
<text x="351.4" y="140.9">20</text>
<text x="371.9" y="140.9">22</text>
<text x="392.4" y="140.9">24</text>
<text x="412.9" y="140.9">26</text>
<text x="433.4" y="140.9">28</text>
<text x="453.9" y="140.9">30</text>
<text x="474.4" y="140.9">32</text>
<text x="494.9" y="140.9">34</text>
<text x="515.3" y="140.9">36</text>
<text x="535.8" y="140.9">38</text>
<text x="556.3" y="140.9">40</text>
<text x="576.8" y="140.9">42</text>
<text x="597.3" y="140.9">44</text>
<text x="617.8" y="140.9">46</text>
<text x="638.3" y="140.9">48</text>
<text x="658.8" y="140.9">50</text>
<text x="679.3" y="140.9">52</text>
<text x="699.8" y="140.9">54</text>
<text x="720.3" y="140.9">56</text>
<text x="740.7" y="140.9">58</text>
<text x="761.2" y="140.9">60</text>
<text x="781.7" y="140.9">62</text>
<text x="802.2" y="140.9">64</text>
<text x="822.7" y="140.9">66</text>
<text x="843.2" y="140.9">68</text>
<text x="863.7" y="140.9">70</text>
<text x="884.2" y="140.9">72</text>
<text x="904.7" y="140.9">74</text>
<text x="925.2" y="140.9">76</text>
<text x="945.7" y="140.9">78</text>
<text x="966.1" y="140.9">80</text>
<text x="986.6" y="140.9">82</text>
<text x="1007.1" y="140.9">84</text>
<text x="1027.6" y="140.9">86</text>
<text x="1048.1" y="140.9">88</text>
<text x="1068.6" y="140.9">90</text>
<text x="1089.1" y="140.9">92</text>
<text x="1109.6" y="140.9">94</text>
<text x="1130.1" y="140.9">96</text>
</g>
<g font-family="Liberation Sans, sans-serif" font-size="9.6" fill="#111" stroke="#111" stroke-width="0.22" text-anchor="middle">
<text transform="translate(80.8 732.2) rotate(-90)">-10</text>
<text transform="translate(80.8 711.7) rotate(-90)">-8</text>
<text transform="translate(80.8 691.2) rotate(-90)">-6</text>
<text transform="translate(80.8 670.7) rotate(-90)">-4</text>
<text transform="translate(80.8 650.2) rotate(-90)">-2</text>
<text transform="translate(80.8 629.8) rotate(-90)">0</text>
<text transform="translate(80.8 609.3) rotate(-90)">2</text>
<text transform="translate(80.8 588.8) rotate(-90)">4</text>
<text transform="translate(80.8 568.3) rotate(-90)">6</text>
<text transform="translate(80.8 547.8) rotate(-90)">8</text>
<text transform="translate(80.8 527.3) rotate(-90)">10</text>
<text transform="translate(80.8 506.8) rotate(-90)">12</text>
<text transform="translate(80.8 486.3) rotate(-90)">14</text>
<text transform="translate(80.8 465.8) rotate(-90)">16</text>
<text transform="translate(80.8 445.3) rotate(-90)">18</text>
<text transform="translate(80.8 424.8) rotate(-90)">20</text>
<text transform="translate(80.8 404.3) rotate(-90)">22</text>
<text transform="translate(80.8 383.9) rotate(-90)">24</text>
<text transform="translate(80.8 363.4) rotate(-90)">26</text>
<text transform="translate(80.8 342.9) rotate(-90)">28</text>
<text transform="translate(80.8 322.4) rotate(-90)">30</text>
<text transform="translate(80.8 301.9) rotate(-90)">32</text>
<text transform="translate(80.8 281.4) rotate(-90)">34</text>
<text transform="translate(80.8 260.9) rotate(-90)">36</text>
<text transform="translate(80.8 240.4) rotate(-90)">38</text>
<text transform="translate(80.8 219.9) rotate(-90)">40</text>
<text transform="translate(80.8 199.4) rotate(-90)">42</text>
<text transform="translate(80.8 178.9) rotate(-90)">44</text>
<text transform="translate(80.8 158.5) rotate(-90)">46</text>
</g>
<rect x="72" y="132" width="23" height="23" fill="#ececec"/>
<path d="M232.8 144.6H244.2L238.5 151.2Z" fill="#000"/>
<path d="M84.6 363.2V374.6L91.2 368.9Z" fill="#000"/>
<defs><linearGradient id="qring" x1="0" y1="0" x2="1" y2="1"><stop offset="0" stop-color="#8a9cc8"/><stop offset="0.45" stop-color="#2a4590"/><stop offset="1" stop-color="#1a2f78"/></linearGradient></defs>
<circle cx="102.05" cy="118.65" r="5.4" fill="#f4f4f4" stroke="url(#qring)" stroke-width="2.3"/><path d="M99 120.6L101.4 119.9M103 115.6L103.6 117.4" stroke="#e06060" stroke-width="0.8"/><path d="M98.6 118.2H105M101.6 115.4V121.4" stroke="#b0b0b0" stroke-width="0.6"/>
<path d="M102.7 119.2L106.6 123.5" stroke="#f0a010" stroke-width="1.9" stroke-linecap="round"/><path d="M103.2 119.2L106.6 123" stroke="#ffd060" stroke-width="0.7"/><circle cx="107.4" cy="124.3" r="1.25" fill="#e06a6a"/>
</svg>
<svg class="abs" style="left:95px;top:155px" width="1044" height="577" viewBox="95 155 1044 577">
<defs><g id="gr" fill="#3c3c3c">
<rect x="95" width="1" height="1"/>
<rect x="105" width="1" height="1"/>
<rect x="115" width="1" height="1"/>
<rect x="126" width="1" height="1"/>
<rect x="136" width="1" height="1"/>
<rect x="146" width="1" height="1"/>
<rect x="156" width="1" height="1"/>
<rect x="166" width="1" height="1"/>
<rect x="177" width="1" height="1"/>
<rect x="187" width="1" height="1"/>
<rect x="197" width="1" height="1"/>
<rect x="207" width="1" height="1"/>
<rect x="218" width="1" height="1"/>
<rect x="228" width="1" height="1"/>
<rect x="238" width="1" height="1"/>
<rect x="248" width="1" height="1"/>
<rect x="259" width="1" height="1"/>
<rect x="269" width="1" height="1"/>
<rect x="279" width="1" height="1"/>
<rect x="289" width="1" height="1"/>
<rect x="300" width="1" height="1"/>
<rect x="310" width="1" height="1"/>
<rect x="320" width="1" height="1"/>
<rect x="330" width="1" height="1"/>
<rect x="341" width="1" height="1"/>
<rect x="351" width="1" height="1"/>
<rect x="361" width="1" height="1"/>
<rect x="371" width="1" height="1"/>
<rect x="382" width="1" height="1"/>
<rect x="392" width="1" height="1"/>
<rect x="402" width="1" height="1"/>
<rect x="412" width="1" height="1"/>
<rect x="423" width="1" height="1"/>
<rect x="433" width="1" height="1"/>
<rect x="443" width="1" height="1"/>
<rect x="453" width="1" height="1"/>
<rect x="464" width="1" height="1"/>
<rect x="474" width="1" height="1"/>
<rect x="484" width="1" height="1"/>
<rect x="494" width="1" height="1"/>
<rect x="505" width="1" height="1"/>
<rect x="515" width="1" height="1"/>
<rect x="525" width="1" height="1"/>
<rect x="535" width="1" height="1"/>
<rect x="546" width="1" height="1"/>
<rect x="556" width="1" height="1"/>
<rect x="566" width="1" height="1"/>
<rect x="576" width="1" height="1"/>
<rect x="587" width="1" height="1"/>
<rect x="597" width="1" height="1"/>
<rect x="607" width="1" height="1"/>
<rect x="617" width="1" height="1"/>
<rect x="628" width="1" height="1"/>
<rect x="638" width="1" height="1"/>
<rect x="648" width="1" height="1"/>
<rect x="658" width="1" height="1"/>
<rect x="669" width="1" height="1"/>
<rect x="679" width="1" height="1"/>
<rect x="689" width="1" height="1"/>
<rect x="699" width="1" height="1"/>
<rect x="710" width="1" height="1"/>
<rect x="720" width="1" height="1"/>
<rect x="730" width="1" height="1"/>
<rect x="740" width="1" height="1"/>
<rect x="750" width="1" height="1"/>
<rect x="761" width="1" height="1"/>
<rect x="771" width="1" height="1"/>
<rect x="781" width="1" height="1"/>
<rect x="791" width="1" height="1"/>
<rect x="802" width="1" height="1"/>
<rect x="812" width="1" height="1"/>
<rect x="822" width="1" height="1"/>
<rect x="832" width="1" height="1"/>
<rect x="843" width="1" height="1"/>
<rect x="853" width="1" height="1"/>
<rect x="863" width="1" height="1"/>
<rect x="873" width="1" height="1"/>
<rect x="884" width="1" height="1"/>
<rect x="894" width="1" height="1"/>
<rect x="904" width="1" height="1"/>
<rect x="914" width="1" height="1"/>
<rect x="925" width="1" height="1"/>
<rect x="935" width="1" height="1"/>
<rect x="945" width="1" height="1"/>
<rect x="955" width="1" height="1"/>
<rect x="966" width="1" height="1"/>
<rect x="976" width="1" height="1"/>
<rect x="986" width="1" height="1"/>
<rect x="996" width="1" height="1"/>
<rect x="1007" width="1" height="1"/>
<rect x="1017" width="1" height="1"/>
<rect x="1027" width="1" height="1"/>
<rect x="1037" width="1" height="1"/>
<rect x="1048" width="1" height="1"/>
<rect x="1058" width="1" height="1"/>
<rect x="1068" width="1" height="1"/>
<rect x="1078" width="1" height="1"/>
<rect x="1089" width="1" height="1"/>
<rect x="1099" width="1" height="1"/>
<rect x="1109" width="1" height="1"/>
<rect x="1119" width="1" height="1"/>
<rect x="1130" width="1" height="1"/>
</g></defs>
<use href="#gr" y="721"/>
<use href="#gr" y="711"/>
<use href="#gr" y="701"/>
<use href="#gr" y="691"/>
<use href="#gr" y="680"/>
<use href="#gr" y="670"/>
<use href="#gr" y="660"/>
<use href="#gr" y="650"/>
<use href="#gr" y="639"/>
<use href="#gr" y="629"/>
<use href="#gr" y="619"/>
<use href="#gr" y="609"/>
<use href="#gr" y="599"/>
<use href="#gr" y="588"/>
<use href="#gr" y="578"/>
<use href="#gr" y="568"/>
<use href="#gr" y="558"/>
<use href="#gr" y="547"/>
<use href="#gr" y="537"/>
<use href="#gr" y="527"/>
<use href="#gr" y="517"/>
<use href="#gr" y="506"/>
<use href="#gr" y="496"/>
<use href="#gr" y="486"/>
<use href="#gr" y="476"/>
<use href="#gr" y="465"/>
<use href="#gr" y="455"/>
<use href="#gr" y="445"/>
<use href="#gr" y="435"/>
<use href="#gr" y="424"/>
<use href="#gr" y="414"/>
<use href="#gr" y="404"/>
<use href="#gr" y="394"/>
<use href="#gr" y="383"/>
<use href="#gr" y="373"/>
<use href="#gr" y="363"/>
<use href="#gr" y="353"/>
<use href="#gr" y="342"/>
<use href="#gr" y="332"/>
<use href="#gr" y="322"/>
<use href="#gr" y="312"/>
<use href="#gr" y="301"/>
<use href="#gr" y="291"/>
<use href="#gr" y="281"/>
<use href="#gr" y="271"/>
<use href="#gr" y="260"/>
<use href="#gr" y="250"/>
<use href="#gr" y="240"/>
<use href="#gr" y="230"/>
<use href="#gr" y="219"/>
<use href="#gr" y="209"/>
<use href="#gr" y="199"/>
<use href="#gr" y="189"/>
<use href="#gr" y="178"/>
<use href="#gr" y="168"/>
<use href="#gr" y="158"/>
<path d="M146.5 155V732M248.5 155V732M351.5 155V732M453.5 155V732M556.5 155V732M658.5 155V732M761.5 155V732M863.5 155V732M966.5 155V732M1068.5 155V732M95 629.5H1139M95 527.5H1139M95 424.5H1139M95 322.5H1139M95 219.5H1139" stroke="#1b1b1b" stroke-width="1" fill="none"/>
<rect x="146.5" y="270.7" width="922.2" height="358.9" rx="20" stroke="#fff" stroke-width="2.6" fill="none"/>
<g stroke="#a30000" stroke-width="1" fill="none"><path d="M126 629.5H167M146.5 609V650"/><circle cx="146.5" cy="629.5" r="5"/></g>
<rect x="196.8" y="326.9" width="196" height="72" rx="36" stroke="#a6a6a6" stroke-width="1.3" fill="none" stroke-dasharray="9.2 2.9 1 2.9" stroke-dashoffset="6.9"/>
<path d="M187.2 362.9L403.2 362.9" stroke="#e60000" stroke-width="1.25" fill="none" stroke-dasharray="17 6.9 1.2 6.9" stroke-dashoffset="12.8"/>
<path d="M294.9 311L294.9 414.6" stroke="#e60000" stroke-width="1.25" fill="none" stroke-dasharray="17 6.9 1.2 6.9" stroke-dashoffset="4.7"/>
<path d="M245.8 346.5A8 8 0 0 1 253.7 337.7L336.1 337.7A8 8 0 0 1 344.0 346.5L340.6 380.8A8 8 0 0 1 332.7 388.0L257.1 388.0A8 8 0 0 1 249.2 380.8Z" stroke="#fff" stroke-width="2.6" fill="none"/>
<circle cx="469.1" cy="362.9" r="38.5" stroke="#fff" stroke-width="2.6" fill="none"/>
<path d="M417.1 362.9L525.9 362.9" stroke="#e60000" stroke-width="1.25" fill="none" stroke-dasharray="17 6.9 1.2 6.9" stroke-dashoffset="1.9"/>
<path d="M469.1 311.2L469.1 414.4" stroke="#e60000" stroke-width="1.25" fill="none" stroke-dasharray="17 6.9 1.2 6.9" stroke-dashoffset="4.6"/>
<path d="M545.6 362.9L608 362.9" stroke="#e60000" stroke-width="1.25" fill="none" stroke-dasharray="17 6.9 1.2 6.9" stroke-dashoffset="9.3"/>
<path d="M576.6 332L576.6 394.4" stroke="#e60000" stroke-width="1.25" fill="none" stroke-dasharray="17 6.9 1.2 6.9" stroke-dashoffset="9.3"/>
<rect x="196.7" y="471.7" width="350.6" height="110" rx="55" stroke="#a6a6a6" stroke-width="1.3" fill="none" stroke-dasharray="9.2 2.9 1 2.9"/>
<path d="M176.8 526.9L566.2 526.9" stroke="#e60000" stroke-width="1.25" fill="none" stroke-dasharray="17 6.9 1.2 6.9" stroke-dashoffset="5.8"/>
<path d="M371.6 455L371.6 599.3" stroke="#e60000" stroke-width="1.25" fill="none" stroke-dasharray="17 6.9 1.2 6.9" stroke-dashoffset="0.0"/>
<path d="M287.7 494.3H456V544H439.3L426 560H317.3L304.3 544H287.7Z" stroke="#fff" stroke-width="2.6" fill="none" stroke-linejoin="miter"/>
<rect x="859" y="465.3" width="158.6" height="112.8" rx="17" stroke="#fff" stroke-width="2.6" fill="none"/>
<path d="M844.9 521.7L1030.5 521.7" stroke="#e60000" stroke-width="1.25" fill="none" stroke-dasharray="17 6.9 1.2 6.9" stroke-dashoffset="11.1"/>
<path d="M938.1 444.5L938.1 591" stroke="#e60000" stroke-width="1.25" fill="none" stroke-dasharray="17 6.9 1.2 6.9" stroke-dashoffset="14.9"/>
<g stroke="#fff" stroke-width="2.2" fill="none"><circle cx="668.8" cy="332.2" r="7.1"/><circle cx="699.6" cy="332.2" r="7.1"/><circle cx="730.3" cy="332.2" r="7.1"/><circle cx="761.0" cy="332.2" r="7.1"/><circle cx="791.8" cy="332.2" r="7.1"/><circle cx="822.5" cy="332.2" r="7.1"/><circle cx="853.2" cy="332.2" r="7.1"/><circle cx="884.0" cy="332.2" r="7.1"/><circle cx="914.7" cy="332.2" r="7.1"/><circle cx="945.5" cy="332.2" r="7.1"/><circle cx="976.2" cy="332.2" r="7.1"/><circle cx="1006.9" cy="332.2" r="7.1"/><circle cx="684.2" cy="352.7" r="7.1"/><circle cx="714.9" cy="352.7" r="7.1"/><circle cx="745.7" cy="352.7" r="7.1"/><circle cx="776.4" cy="352.7" r="7.1"/><circle cx="807.1" cy="352.7" r="7.1"/><circle cx="837.9" cy="352.7" r="7.1"/><circle cx="868.6" cy="352.7" r="7.1"/><circle cx="899.4" cy="352.7" r="7.1"/><circle cx="930.1" cy="352.7" r="7.1"/><circle cx="960.8" cy="352.7" r="7.1"/><circle cx="991.6" cy="352.7" r="7.1"/><circle cx="668.8" cy="373.2" r="7.1"/><circle cx="699.6" cy="373.2" r="7.1"/><circle cx="730.3" cy="373.2" r="7.1"/><circle cx="761.0" cy="373.2" r="7.1"/><circle cx="791.8" cy="373.2" r="7.1"/><circle cx="822.5" cy="373.2" r="7.1"/><circle cx="853.2" cy="373.2" r="7.1"/><circle cx="884.0" cy="373.2" r="7.1"/><circle cx="914.7" cy="373.2" r="7.1"/><circle cx="945.5" cy="373.2" r="7.1"/><circle cx="976.2" cy="373.2" r="7.1"/><circle cx="1006.9" cy="373.2" r="7.1"/><circle cx="684.2" cy="393.7" r="7.1"/><circle cx="714.9" cy="393.7" r="7.1"/><circle cx="745.7" cy="393.7" r="7.1"/><circle cx="776.4" cy="393.7" r="7.1"/><circle cx="807.1" cy="393.7" r="7.1"/><circle cx="837.9" cy="393.7" r="7.1"/><circle cx="868.6" cy="393.7" r="7.1"/><circle cx="899.4" cy="393.7" r="7.1"/><circle cx="930.1" cy="393.7" r="7.1"/><circle cx="960.8" cy="393.7" r="7.1"/><circle cx="991.6" cy="393.7" r="7.1"/><circle cx="668.8" cy="414.1" r="7.1"/><circle cx="699.6" cy="414.1" r="7.1"/><circle cx="730.3" cy="414.1" r="7.1"/><circle cx="761.0" cy="414.1" r="7.1"/><circle cx="791.8" cy="414.1" r="7.1"/><circle cx="822.5" cy="414.1" r="7.1"/><circle cx="853.2" cy="414.1" r="7.1"/><circle cx="884.0" cy="414.1" r="7.1"/><circle cx="914.7" cy="414.1" r="7.1"/><circle cx="945.5" cy="414.1" r="7.1"/><circle cx="976.2" cy="414.1" r="7.1"/><circle cx="1006.9" cy="414.1" r="7.1"/><circle cx="684.2" cy="434.6" r="7.1"/><circle cx="714.9" cy="434.6" r="7.1"/><circle cx="745.7" cy="434.6" r="7.1"/><circle cx="776.4" cy="434.6" r="7.1"/><circle cx="807.1" cy="434.6" r="7.1"/><circle cx="837.9" cy="434.6" r="7.1"/><circle cx="868.6" cy="434.6" r="7.1"/><circle cx="899.4" cy="434.6" r="7.1"/><circle cx="930.1" cy="434.6" r="7.1"/><circle cx="960.8" cy="434.6" r="7.1"/><circle cx="991.6" cy="434.6" r="7.1"/><circle cx="668.8" cy="455.1" r="7.1"/><circle cx="699.6" cy="455.1" r="7.1"/><circle cx="730.3" cy="455.1" r="7.1"/><circle cx="761.0" cy="455.1" r="7.1"/><circle cx="791.8" cy="455.1" r="7.1"/><circle cx="822.5" cy="455.1" r="7.1"/><circle cx="684.2" cy="475.6" r="7.1"/><circle cx="714.9" cy="475.6" r="7.1"/><circle cx="745.7" cy="475.6" r="7.1"/><circle cx="776.4" cy="475.6" r="7.1"/><circle cx="807.1" cy="475.6" r="7.1"/><circle cx="668.8" cy="496.1" r="7.1"/><circle cx="699.6" cy="496.1" r="7.1"/><circle cx="730.3" cy="496.1" r="7.1"/><circle cx="761.0" cy="496.1" r="7.1"/><circle cx="791.8" cy="496.1" r="7.1"/><circle cx="822.5" cy="496.1" r="7.1"/><circle cx="684.2" cy="516.6" r="7.1"/><circle cx="714.9" cy="516.6" r="7.1"/><circle cx="745.7" cy="516.6" r="7.1"/><circle cx="776.4" cy="516.6" r="7.1"/><circle cx="807.1" cy="516.6" r="7.1"/><circle cx="668.8" cy="537.1" r="7.1"/><circle cx="699.6" cy="537.1" r="7.1"/><circle cx="730.3" cy="537.1" r="7.1"/><circle cx="761.0" cy="537.1" r="7.1"/><circle cx="791.8" cy="537.1" r="7.1"/><circle cx="822.5" cy="537.1" r="7.1"/><circle cx="684.2" cy="557.6" r="7.1"/><circle cx="714.9" cy="557.6" r="7.1"/><circle cx="745.7" cy="557.6" r="7.1"/><circle cx="776.4" cy="557.6" r="7.1"/><circle cx="807.1" cy="557.6" r="7.1"/><circle cx="668.8" cy="578.1" r="7.1"/><circle cx="699.6" cy="578.1" r="7.1"/><circle cx="730.3" cy="578.1" r="7.1"/><circle cx="761.0" cy="578.1" r="7.1"/><circle cx="791.8" cy="578.1" r="7.1"/><circle cx="822.5" cy="578.1" r="7.1"/></g>
<circle cx="233.4" cy="362.9" r="7.9" stroke="#cd5c5c" stroke-width="2.2" fill="none"/><rect x="220.8" y="358.1" width="9.5" height="9.5" fill="#1083ae" stroke="#5a9ab8" stroke-width="0.6"/><rect x="236.6" y="358.1" width="9.5" height="9.5" fill="#1083ae" stroke="#5a9ab8" stroke-width="0.6"/><rect x="228.7" y="350.2" width="9.5" height="9.5" fill="#1083ae" stroke="#5a9ab8" stroke-width="0.6"/><rect x="228.7" y="366.0" width="9.5" height="9.5" fill="#003a55" stroke="#5a9ab8" stroke-width="0.6"/><rect x="228.7" y="358.1" width="9.5" height="9.5" fill="#1083ae"/><rect x="230.8" y="360.3" width="5.2" height="5.2" fill="#0000b4"/>
<circle cx="356.5" cy="362.9" r="7.9" stroke="#cd5c5c" stroke-width="2.2" fill="none"/><rect x="343.9" y="358.1" width="9.5" height="9.5" fill="#1083ae" stroke="#5a9ab8" stroke-width="0.6"/><rect x="359.6" y="358.1" width="9.5" height="9.5" fill="#1083ae" stroke="#5a9ab8" stroke-width="0.6"/><rect x="351.8" y="350.2" width="9.5" height="9.5" fill="#1083ae" stroke="#5a9ab8" stroke-width="0.6"/><rect x="351.8" y="366.0" width="9.5" height="9.5" fill="#1083ae" stroke="#5a9ab8" stroke-width="0.6"/><rect x="351.8" y="358.1" width="9.5" height="9.5" fill="#1083ae"/><rect x="353.9" y="360.3" width="5.2" height="5.2" fill="#0000b4"/>
<circle cx="576.6" cy="362.9" r="17.8" stroke="#cd5c5c" stroke-width="2.2" fill="none"/><rect x="553.8" y="357.9" width="10" height="10" fill="#1083ae" stroke="#5a9ab8" stroke-width="0.6"/><rect x="589.4" y="357.9" width="10" height="10" fill="#1083ae" stroke="#5a9ab8" stroke-width="0.6"/><rect x="571.6" y="340.1" width="10" height="10" fill="#1083ae" stroke="#5a9ab8" stroke-width="0.6"/><rect x="571.6" y="375.7" width="10" height="10" fill="#1083ae" stroke="#5a9ab8" stroke-width="0.6"/><circle cx="576.6" cy="362.9" r="4.6" fill="#0000b4" stroke="#4a6fc0" stroke-width="0.6"/>
<circle cx="234.2" cy="526.9" r="16.4" stroke="#cd5c5c" stroke-width="2.2" fill="none"/><rect x="212.8" y="521.9" width="10" height="10" fill="#1083ae" stroke="#5a9ab8" stroke-width="0.6"/><rect x="245.6" y="521.9" width="10" height="10" fill="#1083ae" stroke="#5a9ab8" stroke-width="0.6"/><rect x="229.2" y="505.5" width="10" height="10" fill="#1083ae" stroke="#5a9ab8" stroke-width="0.6"/><rect x="229.2" y="538.3" width="10" height="10" fill="#1083ae" stroke="#5a9ab8" stroke-width="0.6"/><circle cx="234.2" cy="526.9" r="4.6" fill="#0000b4" stroke="#4a6fc0" stroke-width="0.6"/>
<circle cx="509.2" cy="526.9" r="16.4" stroke="#cd5c5c" stroke-width="2.2" fill="none"/><rect x="487.8" y="521.9" width="10" height="10" fill="#1083ae" stroke="#5a9ab8" stroke-width="0.6"/><rect x="520.6" y="521.9" width="10" height="10" fill="#1083ae" stroke="#5a9ab8" stroke-width="0.6"/><rect x="504.2" y="505.5" width="10" height="10" fill="#1083ae" stroke="#5a9ab8" stroke-width="0.6"/><rect x="504.2" y="538.3" width="10" height="10" fill="#1083ae" stroke="#5a9ab8" stroke-width="0.6"/><circle cx="509.2" cy="526.9" r="4.6" fill="#0000b4" stroke="#4a6fc0" stroke-width="0.6"/>
<circle cx="237.9" cy="368.8" r="33.8" stroke="#7d95ab" stroke-opacity="0.55" stroke-width="10" fill="none"/>
<g fill="none" stroke="#b4c6d6" stroke-opacity="0.3" stroke-width="0.7"><circle cx="238.3" cy="369.1" r="30"/><circle cx="237.6" cy="369.0" r="31.6"/><circle cx="238.20000000000002" cy="368.40000000000003" r="33.2"/><circle cx="237.70000000000002" cy="369.2" r="34.8"/><circle cx="238.3" cy="368.8" r="36.4"/><circle cx="237.6" cy="368.5" r="37.8"/></g>
<path d="M237.6 368.3V391.9L242.7 387L247.7 396.9L252.3 394.1L248 384.8L254.4 383.4Z" fill="#fff" stroke="#fff" stroke-width="0.9" stroke-linejoin="round"/><path d="M238.9 371.3V389.1L243.2 385.1L248.3 395.2L250.7 393.7L246.2 383.9L251.7 382.8Z" fill="#fff" stroke="#000" stroke-width="1.05" stroke-linejoin="miter"/>
</svg>
<div class="abs" style="left:1154px;top:107px;width:300px;height:24px;background:linear-gradient(#ebebeb,#dedede);border-top:1px solid #c6c6c6"></div>
<span class="ft" id="dockt" style="left:1295.3px;top:113.00px;font-size:12px;color:#1a1a1a;letter-spacing:-0.026px;">Réteglista</span>
<svg class="abs" style="left:1155px;top:109px" width="40" height="18" viewBox="1155 109 40 18">
<circle cx="1164" cy="117.9" r="7" fill="#5b5b5b"/><path d="M1161 114.9L1167 120.9M1167 114.9L1161 120.9" stroke="#ececec" stroke-width="1.9" stroke-linecap="round"/>
<circle cx="1182" cy="117.9" r="7" fill="#5b5b5b"/><rect x="1180.8" y="114.6" width="5" height="4" fill="none" stroke="#f0f0f0" stroke-width="1.1"/><rect x="1178.2" y="117" width="5" height="4" fill="#5b5b5b" stroke="#f0f0f0" stroke-width="1.1"/>
</svg>
<div class="abs" style="left:1155px;top:130.4px;width:299px;height:25.6px;background:#a8a8a8"></div>
<div class="abs" style="left:1155.8px;top:131.2px;width:58.4px;height:23.6px;background:linear-gradient(#fdfdfd,#f1f1f1 45%,#e3e3e3)"></div>
<div class="abs" style="left:1215.6px;top:131.2px;width:58.4px;height:23.6px;background:linear-gradient(#fdfdfd,#f1f1f1 45%,#e3e3e3)"></div>
<div class="abs" style="left:1275.4px;top:131.2px;width:58.4px;height:23.6px;background:linear-gradient(#fdfdfd,#f1f1f1 45%,#e3e3e3)"></div>
<div class="abs" style="left:1335.2px;top:131.2px;width:58.4px;height:23.6px;background:linear-gradient(#fdfdfd,#f1f1f1 45%,#e3e3e3)"></div>
<div class="abs" style="left:1395.0px;top:131.2px;width:57.6px;height:23.6px;background:linear-gradient(#fdfdfd,#f1f1f1 45%,#e3e3e3)"></div>
<div class="abs" style="left:1155px;top:156px;width:299px;height:642px;background:#fff;border-left:1px solid #d0d0d0"></div>
<svg class="abs" style="left:1155px;top:131px" width="299" height="110" viewBox="1155 131 299 110">
<g transform="translate(1185 143.5)"><path d="M-7.5 0.3C-5 -3.6 -2 -4.6 0 -4.6C3 -4.6 6 -2.6 7.5 0.3C5.5 3.4 3 4.6 0 4.6C-3 4.6 -6 3 -7.5 0.3Z" fill="#000"/><circle cx="0" cy="-0.2" r="3.1" fill="none" stroke="#fff" stroke-width="1.1"/><circle cx="-1.1" cy="-1.3" r="0.9" fill="#fff"/><path d="M-7.6 -0.6C-5 -4.8 -2 -6 0.3 -6C3.3 -6 6 -4.2 7.7 -1" stroke="#000" stroke-width="1" fill="none"/></g>
<g transform="translate(1244.8 143.5)" opacity="0.9"><path d="M-7.5 0.3C-5 -3.6 -2 -4.6 0 -4.6C3 -4.6 6 -2.6 7.5 0.3C5.5 3.4 3 4.6 0 4.6C-3 4.6 -6 3 -7.5 0.3Z" fill="#a9a9a9"/><circle cx="0" cy="-0.2" r="3.1" fill="none" stroke="#fff" stroke-width="1.1"/><circle cx="-1.1" cy="-1.3" r="0.9" fill="#fff"/><path d="M-7.6 -0.6C-5 -4.8 -2 -6 0.3 -6C3.3 -6 6 -4.2 7.7 -1" stroke="#a9a9a9" stroke-width="1" fill="none"/></g>
<path d="M1304.6 137.3V148.7M1298.9 143H1310.3" stroke="#e00000" stroke-width="3"/>
<path d="M1358.8 143H1370.8" stroke="#e00000" stroke-width="2.8"/>
<g transform="translate(1424.8 143)"><g transform="rotate(46) scale(0.82 1.04)"><rect x="-1.9" y="-8" width="3.8" height="12.5" fill="#e9a13b" stroke="#b97416" stroke-width="0.5"/><rect x="-1.9" y="-9.6" width="3.8" height="2.2" fill="#d8433b"/><path d="M-1.9 4.5L0 8.6L1.9 4.5Z" fill="#f3d7a6" stroke="#b97416" stroke-width="0.4"/><path d="M-0.6 7.2L0 8.6L0.6 7.2Z" fill="#333"/></g></g>
<rect x="1161.4" y="163" width="15.2" height="8.4" fill="#000" stroke="#000" stroke-width="0.9"/>
<g transform="translate(1422.7 167.4)"><path d="M-7.5 0.3C-5 -3.6 -2 -4.6 0 -4.6C3 -4.6 6 -2.6 7.5 0.3C5.5 3.4 3 4.6 0 4.6C-3 4.6 -6 3 -7.5 0.3Z" fill="#000"/><circle cx="0" cy="-0.2" r="3.1" fill="none" stroke="#fff" stroke-width="1.1"/><circle cx="-1.1" cy="-1.3" r="0.9" fill="#fff"/><path d="M-7.6 -0.6C-5 -4.8 -2 -6 0.3 -6C3.3 -6 6 -4.2 7.7 -1" stroke="#000" stroke-width="1" fill="none"/></g>
<g transform="translate(1445 167.1)"><rect x="-5.1" y="0" width="10.2" height="6.6" rx="0.6" fill="#b8b8b8"/><path d="M-3.2 0V-3.2A3.2 3.2 0 0 1 3.2 -3.2V0" stroke="#c2c2c2" stroke-width="1.6" fill="none"/></g>
<rect x="1161.4" y="183" width="15.2" height="8.4" fill="#ff0000" stroke="#000" stroke-width="0.9"/>
<g transform="translate(1422.7 187.4)"><path d="M-7.5 0.3C-5 -3.6 -2 -4.6 0 -4.6C3 -4.6 6 -2.6 7.5 0.3C5.5 3.4 3 4.6 0 4.6C-3 4.6 -6 3 -7.5 0.3Z" fill="#000"/><circle cx="0" cy="-0.2" r="3.1" fill="none" stroke="#fff" stroke-width="1.1"/><circle cx="-1.1" cy="-1.3" r="0.9" fill="#fff"/><path d="M-7.6 -0.6C-5 -4.8 -2 -6 0.3 -6C3.3 -6 6 -4.2 7.7 -1" stroke="#000" stroke-width="1" fill="none"/></g>
<g transform="translate(1445 187.1)"><rect x="-5.1" y="0" width="10.2" height="6.6" rx="0.6" fill="#b8b8b8"/><path d="M-3.2 0V-3.2A3.2 3.2 0 0 1 3.2 -3.2V0" stroke="#c2c2c2" stroke-width="1.6" fill="none"/></g>
<rect x="1161.4" y="203" width="15.2" height="8.4" fill="#000" stroke="#000" stroke-width="0.9"/>
<g transform="translate(1422.7 207.4)"><path d="M-7.5 0.3C-5 -3.6 -2 -4.6 0 -4.6C3 -4.6 6 -2.6 7.5 0.3C5.5 3.4 3 4.6 0 4.6C-3 4.6 -6 3 -7.5 0.3Z" fill="#000"/><circle cx="0" cy="-0.2" r="3.1" fill="none" stroke="#fff" stroke-width="1.1"/><circle cx="-1.1" cy="-1.3" r="0.9" fill="#fff"/><path d="M-7.6 -0.6C-5 -4.8 -2 -6 0.3 -6C3.3 -6 6 -4.2 7.7 -1" stroke="#000" stroke-width="1" fill="none"/></g>
<g transform="translate(1445 207.1)"><rect x="-5.1" y="0" width="10.2" height="6.6" rx="0.6" fill="#b8b8b8"/><path d="M-3.2 0V-3.2A3.2 3.2 0 0 1 3.2 -3.2V0" stroke="#c2c2c2" stroke-width="1.6" fill="none"/></g>
<rect x="1161.4" y="223" width="15.2" height="8.4" fill="#a5a5ad" stroke="#000" stroke-width="0.9"/>
<g transform="translate(1422.7 227.4)"><path d="M-7.5 0.3C-5 -3.6 -2 -4.6 0 -4.6C3 -4.6 6 -2.6 7.5 0.3C5.5 3.4 3 4.6 0 4.6C-3 4.6 -6 3 -7.5 0.3Z" fill="#000"/><circle cx="0" cy="-0.2" r="3.1" fill="none" stroke="#fff" stroke-width="1.1"/><circle cx="-1.1" cy="-1.3" r="0.9" fill="#fff"/><path d="M-7.6 -0.6C-5 -4.8 -2 -6 0.3 -6C3.3 -6 6 -4.2 7.7 -1" stroke="#000" stroke-width="1" fill="none"/></g>
<g transform="translate(1445 227.1)"><rect x="-5.1" y="0" width="10.2" height="6.6" rx="0.6" fill="#b8b8b8"/><path d="M-3.2 0V-3.2A3.2 3.2 0 0 1 3.2 -3.2V0" stroke="#c2c2c2" stroke-width="1.6" fill="none"/></g>
<g transform="translate(1400.8 227)"><g transform="rotate(46) scale(0.82 1.04)"><rect x="-1.9" y="-8" width="3.8" height="12.5" fill="#e9a13b" stroke="#b97416" stroke-width="0.5"/><rect x="-1.9" y="-9.6" width="3.8" height="2.2" fill="#d8433b"/><path d="M-1.9 4.5L0 8.6L1.9 4.5Z" fill="#f3d7a6" stroke="#b97416" stroke-width="0.4"/><path d="M-0.6 7.2L0 8.6L0.6 7.2Z" fill="#333"/></g></g>
</svg>
<span class="ft" id="ly0" style="left:1183.0px;top:160.70px;font-size:13px;color:#000;letter-spacing:0.000px;">0</span>
<span class="ft" id="ly1" style="left:1182.2px;top:180.70px;font-size:13px;color:#000;letter-spacing:0.311px;">Központ</span>
<span class="ft" id="ly2" style="left:1182.8px;top:200.70px;font-size:13px;color:#000;letter-spacing:0.059px;">Szellőzés</span>
<span class="ft" id="ly3" style="left:1183.2px;top:220.70px;font-size:13px;color:#000;letter-spacing:-0.027px;">Vissza</span>
<div class="abs" style="left:1454px;top:107px;width:46px;height:691px;background:linear-gradient(90deg,#e9e9e9,#dcdcdc 55%,#cbcbcb);border-left:1px solid #c9c9c9"></div>
<svg class="abs" style="left:1454px;top:107px" width="46" height="400" viewBox="1454 107 46 400">
<path d="M1461.6 116.8H1490" stroke="#a9a9a9" stroke-width="1.9" stroke-dasharray="1.9 4.15"/>
<rect x="1456.3" y="120.4" width="43.2" height="42.3" rx="5" fill="#b3b3b3"/>
<rect x="1456.3" y="416.8" width="43.2" height="43.2" rx="5" fill="#b3b3b3"/>
<path d="M1457 261.3H1500" stroke="#6f6f6f" stroke-width="1" stroke-dasharray="1 2.2"/>
<path d="M1457 409.3H1500" stroke="#6f6f6f" stroke-width="1" stroke-dasharray="1 2.2"/>
<rect x="1463.3" y="127.5" width="27.6" height="27.4" fill="#fff" stroke="#3a3a3a" stroke-width="0.8"/><rect x="1463" y="127.2" width="28.2" height="4.2" fill="#000"/><rect x="1464" y="128.0" width="2.8" height="2.8" fill="#fff"/>
<rect x="1463.3" y="174.3" width="27.6" height="27.4" fill="#fff" stroke="#3a3a3a" stroke-width="0.8"/><rect x="1463" y="174" width="28.2" height="4.2" fill="#000"/><rect x="1464" y="174.8" width="2.8" height="2.8" fill="#fff"/>
<rect x="1463.3" y="220.3" width="27.6" height="27.4" fill="#fff" stroke="#3a3a3a" stroke-width="0.8"/><rect x="1463" y="220" width="28.2" height="4.2" fill="#000"/><rect x="1464" y="220.8" width="2.8" height="2.8" fill="#fff"/>
<rect x="1463.3" y="276.3" width="27.6" height="27.4" fill="#fff" stroke="#3a3a3a" stroke-width="0.8"/><rect x="1463" y="276" width="28.2" height="4.2" fill="#000"/><rect x="1464" y="276.8" width="2.8" height="2.8" fill="#fff"/>
<rect x="1463.3" y="322.3" width="27.6" height="27.4" fill="#fff" stroke="#3a3a3a" stroke-width="0.8"/><rect x="1463" y="322" width="28.2" height="4.2" fill="#000"/><rect x="1464" y="322.8" width="2.8" height="2.8" fill="#fff"/>
<rect x="1463.3" y="368.3" width="27.6" height="27.4" fill="#fff" stroke="#3a3a3a" stroke-width="0.8"/><rect x="1463" y="368" width="28.2" height="4.2" fill="#000"/><rect x="1464" y="368.8" width="2.8" height="2.8" fill="#fff"/>
<rect x="1463.3" y="424.3" width="27.6" height="27.4" fill="#fff" stroke="#3a3a3a" stroke-width="0.8"/><rect x="1463" y="424" width="28.2" height="4.2" fill="#000"/><rect x="1464" y="424.8" width="2.8" height="2.8" fill="#fff"/>
<rect x="1463.3" y="471.3" width="27.6" height="27.4" fill="#fff" stroke="#3a3a3a" stroke-width="0.8"/><rect x="1463" y="471" width="28.2" height="4.2" fill="#000"/><rect x="1464" y="471.8" width="2.8" height="2.8" fill="#fff"/>
<g transform="translate(1477 143.0) scale(1 0.78)"><path d="M-6.6 -2.6L1.4 -6.4V4.8L-6.6 8.6Z" fill="#d9d9d9" stroke="#333" stroke-width="0.8"/><path d="M-4.6 -3.6L3.4 -7.4V3.8L-4.6 7.6Z" fill="#e6e6e6" stroke="#333" stroke-width="0.8"/><path d="M-2.4 -4.6L6.2 -8.6V2.8L-2.4 6.8Z" fill="#fff" stroke="#333" stroke-width="0.8"/><path d="M-0.6 4L4.4 -4.6V2Z" fill="none" stroke="#e03030" stroke-width="0.8"/></g>
<rect x="1469.8" y="183.4" width="10.6" height="7.4" fill="#f6e6a8" stroke="#333" stroke-width="0.8"/><circle cx="1479.4" cy="191.2" r="4.4" fill="#f6e6a8" fill-opacity="0.8" stroke="#333" stroke-width="0.8"/>
<rect x="1468.8" y="230.6" width="16.6" height="10.8" rx="2" fill="#f1f3f8" stroke="#b8c8e0" stroke-width="0.9"/>
<rect x="1466" y="284.4" width="3.6" height="3" fill="#000"/><rect x="1472.6" y="284.4" width="15" height="3" fill="#fff" stroke="#333" stroke-width="0.6"/>
<rect x="1466" y="290.59999999999997" width="3.6" height="3" fill="#000"/><rect x="1472.6" y="290.59999999999997" width="15" height="3" fill="#fff" stroke="#333" stroke-width="0.6"/>
<rect x="1466" y="296.79999999999995" width="3.6" height="3" fill="#000"/><rect x="1472.6" y="296.79999999999995" width="15" height="3" fill="#fff" stroke="#333" stroke-width="0.6"/>
<path d="M1470 331.6Q1477 329.2 1484 331.6L1478.8 337.6V344.6L1475.4 342.4V337.6Z" fill="#a4a4a4" stroke="#4a4a4a" stroke-width="0.8" stroke-linejoin="round"/><ellipse cx="1477" cy="331.8" rx="7" ry="1.6" fill="#c4c4c4" stroke="#3c3c3c" stroke-width="0.7"/>
<path d="M1466.6 384H1489" stroke="#f2a0a0" stroke-width="0.8" stroke-dasharray="2.4 1"/><path d="M1469.2 377.6V390.6L1474 387.4V380.8Z" fill="#f4f4f4" stroke="#222" stroke-width="0.8"/><rect x="1474" y="380.8" width="9.8" height="6.6" rx="1.2" fill="#9c9c9c" stroke="#444" stroke-width="0.7"/>
<g font-family="Liberation Sans, sans-serif" font-size="2.6" fill="#333"><text x="1465.4" y="433.6">Command: line</text><text x="1465.4" y="437">Command: line</text><text x="1465.4" y="440.4">Command: move</text><text x="1465.4" y="443.8">Command: mirror</text><text x="1472" y="450.4" font-size="3">command</text></g><path d="M1463.3 446.4H1491" stroke="#222" stroke-width="0.7"/>
<rect x="1470.6" y="480.2" width="12.8" height="15" rx="1" fill="#d39a3f" stroke="#a56e1e" stroke-width="0.7"/><rect x="1472.4" y="482" width="9.2" height="11.6" fill="#f5f5ef"/><path d="M1473.6 484.6H1480.4M1473.6 486.6H1480.4M1473.6 488.6H1480.4M1473.6 490.6H1478.6" stroke="#c4c4c0" stroke-width="0.6"/><rect x="1474.4" y="479" width="5.2" height="2.6" rx="0.8" fill="#9a9a92"/>
</svg>
<div class="abs" style="left:72px;top:732px;width:1082px;height:17px;background:#fafafa"></div><div class="abs" style="left:72px;top:732px;width:23px;height:16px;background:#ececec"></div>
<div class="abs" style="left:301px;top:736px;width:604px;height:8px;background:#7f7f7f;border-radius:4px"></div>
<div class="abs" style="left:1098px;top:733px;width:56px;height:15px;background:#ececec"></div>
<span class="ft" id="zoomlbl" style="left:1118.2px;top:733.60px;font-size:13px;color:#000;letter-spacing:-0.274px;">1 &lt; 10</span>
<div class="abs" style="left:72px;top:747.5px;width:1082px;height:23px;background:#fff;border-top:2px solid #c2c2c2;border-bottom:1px solid #d0d0d0"></div>
<span class="ft" id="hist1" style="left:76.7px;top:753.05px;font-size:12.7px;color:#1414e6;letter-spacing:0.316px;font-style:italic">Parancs:</span>
<span class="ft" id="hist2" style="left:131.7px;top:753.05px;font-size:12.7px;color:#0000c8;letter-spacing:0.462px;">new</span>
<div class="abs" style="left:1142.5px;top:750px;width:7.5px;height:18px;background:#7f7f7f;border-radius:4px"></div>
<div class="abs" style="left:72px;top:771px;width:1082px;height:27px;background:#ececec"></div>
<span class="ft" id="cmdl" style="left:72.3px;top:778.70px;font-size:13px;color:#000;letter-spacing:0.155px;">Parancs:</span>
<div class="abs" style="left:128px;top:776px;width:999px;height:18px;background:#fff"></div>
<div class="abs" style="left:1127.5px;top:772.5px;width:25px;height:25px;background:linear-gradient(#fdfdfd,#e9e9e9);border:1px solid #b0b0b0"></div>
<div class="abs" style="left:1133px;top:779.5px;width:14px;height:10px;border:1px solid #000;border-top:3px solid #000;background:#fff"></div>
<div id="status"></div>
<span class="ft" id="st1" style="left:2.1px;top:808.00px;font-size:10px;color:#000;letter-spacing:0.177px;">8.9512,25.4146</span>
<span class="ft" id="st2" style="left:1.8px;top:828.30px;font-size:10px;color:#000;letter-spacing:0.071px;">@8.9512,25.4146</span>
<div class="abs" style="left:253px;top:802px;width:1px;height:42px;background:#8a8a8a"></div>
<span class="ft" id="st3" style="left:256.0px;top:808.00px;font-size:10px;color:#000;letter-spacing:0.391px;">26.9449&lt;70.60°</span>
<span class="ft" id="st4" style="left:255.8px;top:828.30px;font-size:10px;color:#000;letter-spacing:0.263px;">@26.9449&lt;70.60°</span>
<div class="abs" style="left:506px;top:818.5px;width:6px;height:6px;border-radius:3px;background:#c9c9c9"></div>
<div class="abs" style="left:940.5px;top:818.5px;width:6px;height:6px;border-radius:3px;background:#c9c9c9"></div>
<div class="abs" style="left:1269.5px;top:818.5px;width:6px;height:6px;border-radius:3px;background:#c9c9c9"></div>
<span class="ft" id="st5" style="left:556.8px;top:812.95px;font-size:9.3px;color:#000;letter-spacing:0.420px;">Egység vagy régió kiválasztása</span>
<span class="ft" id="st6" style="left:534.8px;top:823.75px;font-size:9.3px;color:#000;letter-spacing:0.439px;">Entitás vagy hivatkozás áthelyezése</span>
<span class="ft" id="st7" style="left:948.2px;top:812.95px;font-size:9.3px;color:#000;letter-spacing:0.552px;">Kiválasztott szervezetek:</span>
<span class="ft" id="st8" style="left:948.6px;top:823.75px;font-size:9.3px;color:#000;letter-spacing:0.529px;">5 Körök a "0" rétegen 5 Körök".</span>
<svg class="abs" style="left:715px;top:803.9px" width="24" height="34" viewBox="715 803 24 34">
<rect x="718.2" y="805.5" width="16.6" height="29" rx="8" fill="#fff" stroke="#333" stroke-width="1"/>
<path d="M718.2 817.5H734.8M726.5 805.5V817.5" stroke="#333" stroke-width="0.9"/>
<rect x="725" y="808" width="3" height="6.5" rx="1.5" fill="#fff" stroke="#333" stroke-width="0.9"/></svg>
</div></body></html>
